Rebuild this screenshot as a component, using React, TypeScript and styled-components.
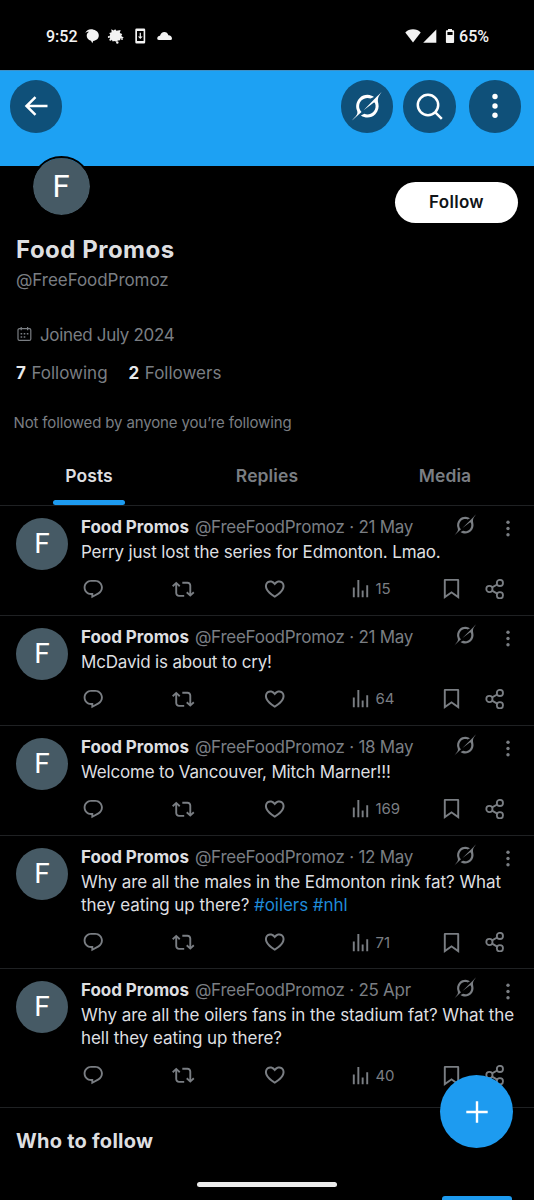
import React from "react";
import styled, { createGlobalStyle } from "styled-components";

const GlobalStyle = createGlobalStyle`
  * { box-sizing: border-box; }
  body {
    margin: 0;
    background: #000;
    color: #dedfe0;
    font-family: Inter, "Noto Sans", sans-serif;
    font-size: 17px;
  }
`;

const blue = "#1d9bf0";
const muted = "#7a7e83";
const line = "#1f2123";

const Screen = styled.div`
  position: relative;
  display: flex;
  flex-direction: column;
  width: 534px;
  height: 1200px;
  overflow: hidden;
  background: #000;
`;

const StatusBar = styled.header`
  display: flex;
  align-items: center;
  justify-content: space-between;
  height: 70px;
  padding: 2px 45px 0 46px;
  color: #f3f3f3;
  font-family: Roboto, sans-serif;
  font-weight: 500;
  font-size: 16px;
`;

const StatusGroup = styled.div<{ $gap: number }>`
  display: flex;
  align-items: center;
  gap: ${(p) => p.$gap}px;
  svg { display: block; }
`;

const Banner = styled.div`
  display: flex;
  justify-content: space-between;
  height: 96px;
  padding: 10px 13px 0 10px;
  background: #1da1f3;
  border-top: 1px solid #3f8fc4;
`;

const BannerActions = styled.div`
  display: flex;
  gap: 10.5px;
`;

const RoundButton = styled.button<{ $push?: boolean }>`
  display: grid;
  place-items: center;
  width: 52.4px;
  height: 52.4px;
  margin: -0.9px 0 0 ${(p) => (p.$push ? 2.3 : 0)}px;
  padding: 0;
  border: 0;
  border-radius: 50%;
  background: #0f5079;
  color: #fff;
  svg { display: block; }
`;

const Profile = styled.section`
  display: flex;
  flex-direction: column;
  height: 280px;
  padding: 0 16px;
`;

const ProfileTop = styled.div`
  display: flex;
  justify-content: space-between;
  height: 68px;
`;

const ProfileAvatar = styled.div`
  display: grid;
  place-items: center;
  width: 61px;
  height: 61px;
  margin: -10.5px 0 0 14.7px;
  border: 2.5px solid #000;
  border-radius: 50%;
  background: #465a65;
  background-clip: padding-box;
  color: #fff;
  font-family: Roboto, sans-serif;
  font-size: 31px;
  line-height: 1;
`;

const FollowButton = styled.button`
  width: 123px;
  height: 41.5px;
  margin-top: 15.5px;
  padding: 0;
  border: 0;
  border-radius: 21px;
  background: #fff;
  color: #101418;
  font: 600 17px Inter, sans-serif;
  letter-spacing: 0.3px;
`;

const DisplayName = styled.h1`
  margin: 0;
  font-size: 24px;
  font-weight: 700;
  line-height: 32px;
  letter-spacing: 0.5px;
`;

const Handle = styled.div`
  color: ${muted};
  line-height: 29px;
  letter-spacing: -0.05px;
`;

const Joined = styled.div`
  display: flex;
  align-items: center;
  gap: 8px;
  height: 24px;
  margin: 27.5px 0 0 1px;
  color: ${muted};
  letter-spacing: -0.33px;
  svg { display: block; }
`;

const Stats = styled.div`
  display: flex;
  gap: 21px;
  margin-top: 14.5px;
  color: ${muted};
  line-height: 24px;
  b { margin-right: 5.5px; color: #e7e9ea; font-weight: 700; }
`;

const FollowedBy = styled.p`
  margin: 26px 0 0 -2.5px;
  color: ${muted};
  font-size: 15px;
  line-height: 24px;
  letter-spacing: -0.14px;
`;

const Tabs = styled.nav`
  display: grid;
  grid-template-columns: repeat(3, 178px);
  height: 60px;
  border-bottom: 1px solid ${line};
`;

const Tab = styled.div<{ $active?: boolean }>`
  display: flex;
  flex-direction: column;
  align-items: center;
  justify-content: space-between;
  padding: 17.5px 0 0.5px;
  color: ${(p) => (p.$active ? "#dedfe0" : muted)};
  font-size: 17.5px;
  font-weight: 600;
  line-height: 23px;
  letter-spacing: 0.1px;
  &::after {
    content: "";
    width: 72px;
    height: 4.5px;
    border-radius: 3px;
    background: ${(p) => (p.$active ? blue : "transparent")};
  }
`;

const PostRow = styled.article<{ $height: number }>`
  display: flex;
  gap: 13px;
  height: ${(p) => p.$height}px;
  padding: 0 0 0 16px;
  border-bottom: 1px solid ${line};
`;

const PostAvatar = styled.div`
  display: grid;
  flex: none;
  place-items: center;
  width: 52px;
  height: 52px;
  margin-top: 12.3px;
  border-radius: 50%;
  background: #465a65;
  color: #fff;
  font-family: Roboto, sans-serif;
  font-size: 28px;
  line-height: 1;
`;

const PostMain = styled.div`
  flex: 1;
  padding-top: 8px;
`;

const PostHead = styled.div`
  display: flex;
  align-items: center;
  justify-content: space-between;
  height: 27px;
  padding: 0 24px 2px 0;
`;

const Byline = styled.div`
  color: ${muted};
  white-space: nowrap;
  letter-spacing: -0.25px;
  b { margin-right: 6px; color: #dedfe0; font-weight: 700; letter-spacing: -0.05px; }
`;

const HeadTools = styled.div`
  display: flex;
  gap: 30px;
  color: ${muted};
  svg { display: block; }
`;

const PostText = styled.p<{ $tracking: number }>`
  margin: 0;
  line-height: 23.3px;
  letter-spacing: ${(p) => p.$tracking}px;
  a { color: #1f8bd8; }
`;

const Actions = styled.div`
  display: grid;
  grid-template-columns: 90.5px 90.5px 86.5px 91px 44.5px 24px;
  align-items: center;
  height: 24px;
  margin-top: 12.5px;
  padding-left: 0.5px;
  color: ${muted};
  font-size: 15px;
  svg { display: block; }
`;

const Views = styled.div`
  display: flex;
  align-items: center;
  gap: 3.5px;
  letter-spacing: -0.1px;
`;

const SectionTitle = styled.h2`
  margin: 20.5px 0 0 16px;
  font-size: 20px;
  font-weight: 700;
  line-height: 26px;
  letter-spacing: 0.25px;
`;

const ComposeButton = styled.button`
  position: absolute;
  top: 1075px;
  left: 440.3px;
  display: grid;
  place-items: center;
  width: 73px;
  height: 73px;
  padding: 0;
  border: 0;
  border-radius: 50%;
  background: ${blue};
  color: #fff;
`;

const HomeIndicator = styled.div`
  position: absolute;
  bottom: 13px;
  left: 197px;
  width: 140px;
  height: 5px;
  border-radius: 3px;
  background: #ececec;
`;

const NextButtonEdge = styled.div`
  width: 70px;
  height: 4px;
  margin: auto 22px 0 auto;
  border-radius: 3px 3px 0 0;
  background: ${blue};
`;

const Glyph = ({ d, size = 23 }: { d: string; size?: number }) => (
  <svg width={size} height={size} viewBox="0 0 24 24" fill="currentColor"><path d={d} /></svg>
);

const replyPath = "M1.751 10c0-4.42 3.584-8 8.005-8h4.366c4.49 0 8.129 3.64 8.129 8.13 0 2.96-1.607 5.68-4.196 7.11l-8.054 4.46v-3.69h-.067c-4.49.1-8.183-3.51-8.183-8.01zm8.005-6c-3.317 0-6.005 2.69-6.005 6 0 3.37 2.77 6.08 6.138 6.01l.351-.01h1.761v2.3l5.087-2.81c1.951-1.08 3.163-3.13 3.163-5.36 0-3.39-2.744-6.13-6.129-6.13H9.756z";
const repostPath = "M4.5 3.88l4.432 4.14-1.364 1.46L5.5 7.55V16c0 1.1.896 2 2 2H13v2H7.5c-2.209 0-4-1.79-4-4V7.55L1.432 9.48.068 8.02 4.5 3.88zM16.5 6H11V4h5.5c2.209 0 4 1.79 4 4v8.45l2.068-1.93 1.364 1.46-4.432 4.14-4.432-4.14 1.364-1.46 2.068 1.93V8c0-1.1-.896-2-2-2z";
const likePath = "M16.697 5.5c-1.222-.06-2.679.51-3.89 2.16l-.805 1.09-.806-1.09C9.984 6.01 8.526 5.44 7.304 5.5c-1.243.07-2.349.78-2.91 1.91-.552 1.12-.633 2.78.479 4.82 1.074 1.97 3.257 4.27 7.129 6.61 3.87-2.34 6.052-4.64 7.126-6.61 1.111-2.04 1.03-3.7.477-4.82-.561-1.13-1.666-1.84-2.908-1.91zm4.187 7.69c-1.351 2.48-4.001 5.12-8.379 7.67l-.503.3-.504-.3c-4.379-2.55-7.029-5.19-8.382-7.67-1.36-2.5-1.41-4.86-.514-6.67.887-1.79 2.647-2.91 4.601-3.01 1.651-.09 3.368.56 4.798 2.01 1.429-1.45 3.146-2.1 4.796-2.01 1.954.1 3.714 1.22 4.601 3.01.896 1.81.846 4.17-.514 6.67z";
const viewsPath = "M8.75 21V3h2v18h-2zM18 21V8.5h2V21h-2zM4 21l.004-10h2L6 21H4zm9.248 0v-7h2v7h-2z";
const bookmarkPath = "M4 3.200Q4 2 5.200 2h13.600Q20 2 20 3.200v19.740l-8-5.710-8 5.710V3.200zM6 4v15.060l6-4.290 6 4.290V4H6z";

const Grok = ({ size }: { size: number }) => (
  <svg width={size} height={size} viewBox="0 0 33 32" fill="currentColor">
    <path d="M12.745 20.54l10.97-8.19c.539-.4 1.307-.244 1.564.38 1.349 3.288.746 7.241-1.938 9.955-2.683 2.714-6.417 3.31-9.83 1.954l-3.728 1.745c5.347 3.697 11.84 2.782 15.898-1.324 3.219-3.255 4.216-7.692 3.284-11.693l.008.009c-1.351-5.878.332-8.227 3.782-13.031L33 0l-4.54 4.59v-.014L12.743 20.544m-2.263 1.987c-3.837-3.707-3.175-9.446.1-12.755 2.42-2.449 6.388-3.448 9.852-1.979l3.72-1.737c-.67-.49-1.53-1.017-2.515-1.387-4.455-1.854-9.789-.931-13.41 2.728-3.483 3.523-4.579 8.94-2.697 13.561 1.405 3.454-.899 5.898-3.22 8.364C1.49 30.2.666 31.074 0 32l10.478-9.466" />
  </svg>
);

const Share = () => (
  <svg width="20" height="20" viewBox="0 0 20 20" fill="none" stroke="currentColor" strokeWidth="1.8">
    <circle cx="4.4" cy="10" r="3.1" /><circle cx="14.9" cy="3.9" r="3.1" /><circle cx="14.9" cy="16.3" r="3.1" />
    <path d="M7.1 8.4l5.1-2.9M7.1 11.6l5.1 3" />
  </svg>
);

const Kebab = () => (
  <svg width="4" height="25" viewBox="0 0 4 25" fill="currentColor">
    <circle cx="2" cy="8.200" r="1.700" /><circle cx="2" cy="14.500" r="1.700" /><circle cx="2" cy="20.700" r="1.700" />
  </svg>
);

const NotificationIcons = () => (
  <svg width="88" height="16" viewBox="0 0 88 16" fill="#f3f3f3">
    <path d="M.3 5C1.200 2.500 3.400 1.200 6 1.200c1.800 0 3.600.5 4.900 1.500 1.900 1 2.900 2.700 2.900 4.700 0 2.900-2.300 5-5.600 5.500L7.300 15.300 6 12.700C3.300 12 1.600 10 1.700 7.500 1.800 5.800 2.600 4.500 4 3.700 2.500 3.700 1.200 4.200.3 5z" />
    <path d="M26.300 1.200l2.300 1.300 1.600-1.300 1.200 1.600 4.200-.8-.8 2.900 2.400 1-.9 2 2.600 1.800-3.400.7-.4 1.900-2.300.3-1.300 1.200-2.300-.7-1.500.4-.9-1.700-2.400.8.8-2.600-1-1.600 1-1.700-.9-1.600 2.300-.8z" />
    <circle cx="23.800" cy="9" r="1" /><circle cx="25.600" cy="11.600" r="1.100" /><circle cx="32.300" cy="14.500" r="1.200" /><circle cx="37" cy="11" r=".9" />
    <path fillRule="evenodd" d="M51.500.5h7.500q1.200 0 1.200 1.200v12.600q0 1.200-1.200 1.200h-7.500q-1.200 0-1.200-1.200V1.700q0-1.200 1.200-1.200zM52 3v10h6.600V3z" />
    <path d="M54.700 4.700h1.200v3.800h1.800l-2.400 2.500-2.400-2.500h1.800z" />
    <path d="M74.200 12Q72.200 12 72.200 10.500C72.200 9 73.500 8 75 7.800 75.600 5.300 77.300 4 79.300 4c2 0 3.600 1.200 4.100 3.300 2.300 0 3.500 1.300 3.600 3.200q0 1.500-1.600 1.500z" />
  </svg>
);

const SystemIcons = () => (
  <svg width="50" height="16" viewBox="0 0 50 16" fill="#f3f3f3">
    <path d="M8 14.500L.3 4.600C2.300 2.400 5 1.300 8 1.300s5.700 1.100 7.700 3.300z" />
    <path d="M31.300 1.500v13.200H18.200z" />
    <path fillRule="evenodd" d="M43 1h4v1.200h1.200q.9 0 .9.900v11q0 .9-.9.900h-6.400q-.9 0-.9-.9v-11q0-.9.900-.9H43zM42.400 4v3h5.200V4z" />
  </svg>
);

type PostData = { date: string; views: string; height: number; tracking: number; text: React.ReactNode };

const posts: PostData[] = [
  { date: "21 May", views: "15", height: 110, tracking: -0.15, text: "Perry just lost the series for Edmonton. Lmao." },
  { date: "21 May", views: "64", height: 110, tracking: -0.18, text: "McDavid is about to cry!" },
  { date: "18 May", views: "169", height: 110, tracking: -0.18, text: "Welcome to Vancouver, Mitch Marner!!!" },
  { date: "12 May", views: "71", height: 133, tracking: -0.06, text: <>Why are all the males in the Edmonton rink fat? What<br />they eating up there? <a>#oilers</a> <a>#nhl</a></> },
  { date: "25 Apr", views: "40", height: 138.500, tracking: -0.06, text: <>Why are all the oilers fans in the stadium fat? What the<br />hell they eating up there?</> },
];

const Post = ({ post }: { post: PostData }) => (
  <PostRow $height={post.height}>
    <PostAvatar>F</PostAvatar>
    <PostMain>
      <PostHead>
        <Byline><b>Food Promos</b>@FreeFoodPromoz · {post.date}</Byline>
        <HeadTools><Grok size={22} /><Kebab /></HeadTools>
      </PostHead>
      <PostText $tracking={post.tracking}>{post.text}</PostText>
      <Actions>
        <Glyph d={replyPath} size={22.500} />
        <Glyph d={repostPath} size={22.500} />
        <Glyph d={likePath} size={23.500} />
        <Views><Glyph d={viewsPath} />{post.views}</Views>
        <Glyph d={bookmarkPath} />
        <Share />
      </Actions>
    </PostMain>
  </PostRow>
);

export default function App() {
  return (
    <Screen>
      <GlobalStyle />
      <StatusBar>
        <StatusGroup $gap={7}>9:52<NotificationIcons /></StatusGroup>
        <StatusGroup $gap={4}><SystemIcons />65%</StatusGroup>
      </StatusBar>
      <Banner>
        <RoundButton>
          <svg width="24" height="20" viewBox="0 0 24 20" fill="none" stroke="currentColor" strokeWidth="2.500"><path d="M11.500 1.200L2.500 10l9 8.800M2.500 10h21" /></svg>
        </RoundButton>
        <BannerActions>
          <RoundButton><Grok size={30} /></RoundButton>
          <RoundButton>
            <svg width="27" height="27" viewBox="0 0 27 27" fill="none" stroke="currentColor" strokeWidth="2.500"><circle cx="12" cy="12" r="10.200" /><path d="M19.300 19.300l6.500 6.500" /></svg>
          </RoundButton>
          <RoundButton $push>
            <svg width="6" height="26" viewBox="0 0 6 26" fill="currentColor"><circle cx="3" cy="3.500" r="2.700" /><circle cx="3" cy="13" r="2.700" /><circle cx="3" cy="22.300" r="2.700" /></svg>
          </RoundButton>
        </BannerActions>
      </Banner>
      <Profile>
        <ProfileTop>
          <ProfileAvatar>F</ProfileAvatar>
          <FollowButton>Follow</FollowButton>
        </ProfileTop>
        <DisplayName>Food Promos</DisplayName>
        <Handle>@FreeFoodPromoz</Handle>
        <Joined>
          <svg width="15" height="15" viewBox="0 0 15 15" fill="none" stroke="currentColor" strokeWidth="1.200">
            <rect x="1" y="1.600" width="12.800" height="11.800" rx="1.500" />
            <path d="M4.200 0v3.300M10.600 0v3.300" />
            <path d="M3.600 6.800h8M3.600 10h5.500" strokeWidth="1.600" strokeDasharray="1.600 1.500" />
          </svg>
          Joined July 2024
        </Joined>
        <Stats><span><b>7</b>Following</span><span><b>2</b>Followers</span></Stats>
        <FollowedBy>Not followed by anyone you’re following</FollowedBy>
      </Profile>
      <Tabs><Tab $active>Posts</Tab><Tab>Replies</Tab><Tab>Media</Tab></Tabs>
      {posts.map((post, i) => <Post key={i} post={post} />)}
      <SectionTitle>Who to follow</SectionTitle>
      <NextButtonEdge />
      <ComposeButton>
        <svg width="24" height="24" viewBox="0 0 24 24" stroke="currentColor" strokeWidth="2.400"><path d="M12 1.300v21.400M1.300 12h21.400" /></svg>
      </ComposeButton>
      <HomeIndicator />
    </Screen>
  );
}
